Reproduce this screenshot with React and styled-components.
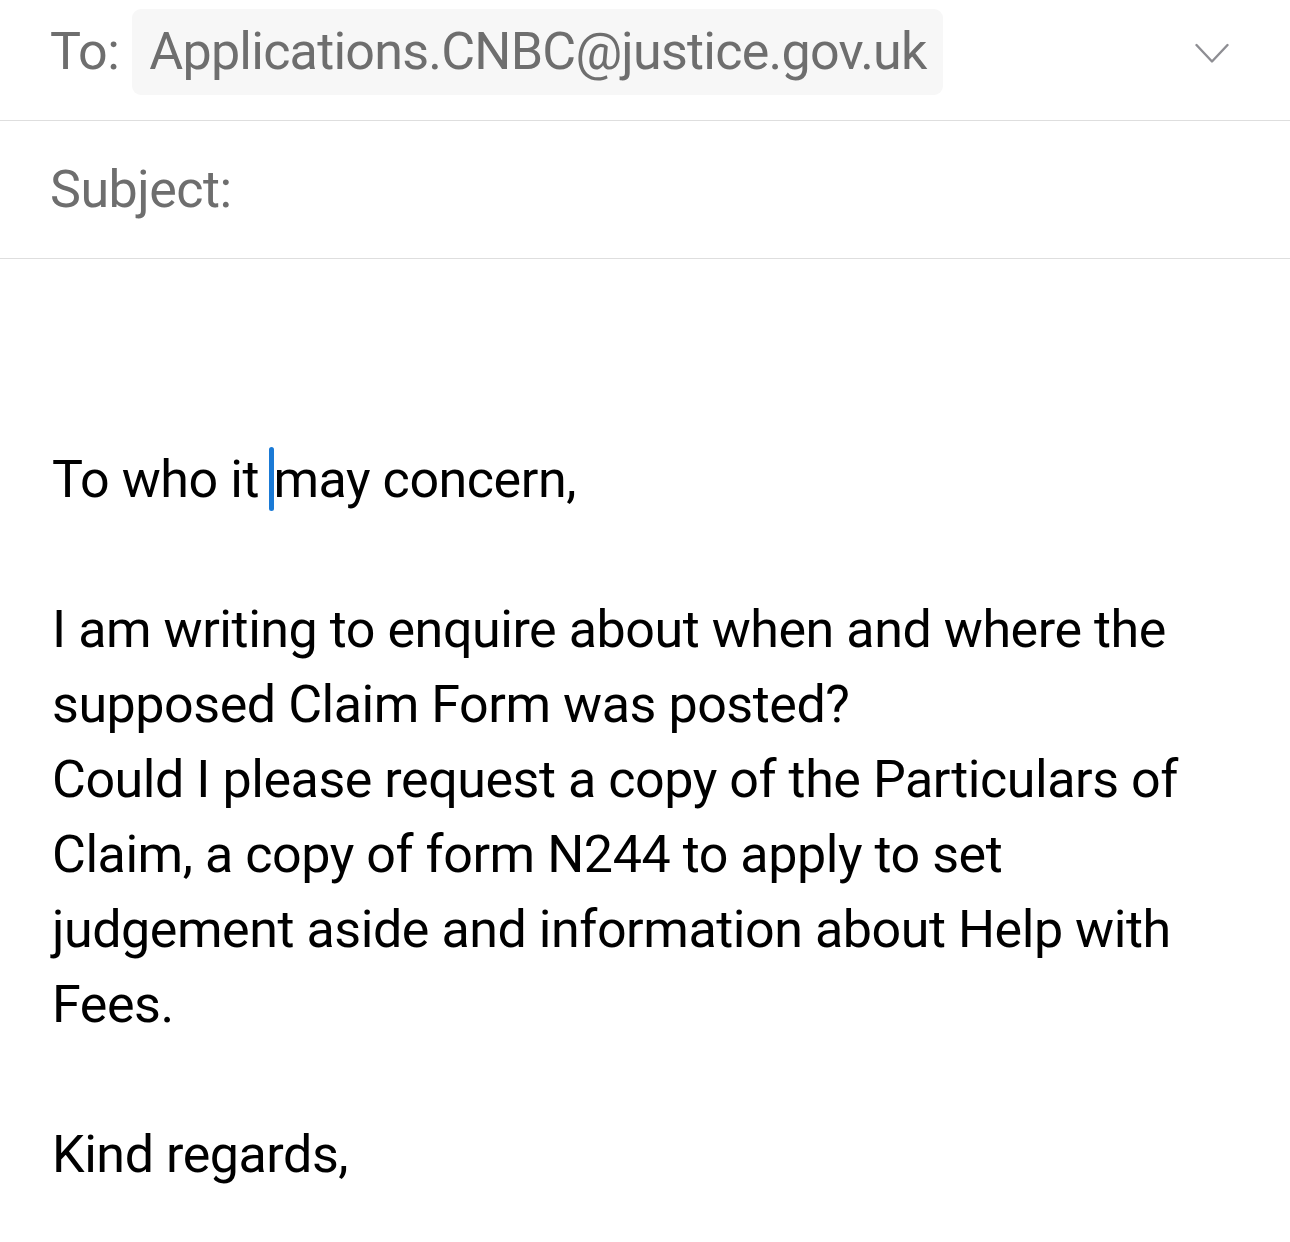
import React from "react";
import styled, { createGlobalStyle } from "styled-components";

const GlobalStyle = createGlobalStyle`
  html, body {
    margin: 0;
    padding: 0;
    background: #ffffff;
  }
  body {
    font-family: Roboto, "Liberation Sans", Arial, sans-serif;
    -webkit-font-smoothing: antialiased;
  }
`;

const bodyLines = [
  { text: "To who it ", caret: true, rest: "may concern," },
  { text: "" },
  { text: "I am writing to enquire about when and where the" },
  { text: "supposed Claim Form was posted?" },
  { text: "Could I please request a copy of the Particulars of" },
  { text: "Claim, a copy of form N244 to apply to set" },
  { text: "judgement aside and information about Help with" },
  { text: "Fees." },
  { text: "" },
  { text: "Kind regards," },
];

export default function App() {
  return (
    <>
      <GlobalStyle />
      <Compose>
        <ToRow>
          <Label>To:</Label>
          <Recipient>Applications.CNBC@justice.gov.uk</Recipient>
          <Chevron>
            <svg width="34" height="22" viewBox="0 0 34 22" fill="none">
              <path
                d="M1.5 2 L17 18.5 L32.5 2"
                stroke="#8e8e93"
                strokeWidth="2.4"
                strokeLinecap="round"
                strokeLinejoin="round"
              />
            </svg>
          </Chevron>
        </ToRow>
        <SubjectRow>
          <Label>Subject:</Label>
        </SubjectRow>
        <Body>
          {bodyLines.map((line, i) => (
            <Line key={i}>
              {line.text || "\u00a0"}
              {line.caret && <Caret />}
              {line.rest}
            </Line>
          ))}
        </Body>
      </Compose>
    </>
  );
}

const Compose = styled.div`
  width: 1290px;
  min-height: 1242px;
  background: #ffffff;
`;

const ToRow = styled.div`
  display: flex;
  align-items: flex-start;
  height: 111px;
  padding: 9px 0 0 50px;
  border-bottom: 1px solid #dedede;
`;

const Label = styled.span`
  font-size: 52px;
  line-height: 86px;
  color: #6e6e6e;
  letter-spacing: -0.5px;
`;

const Recipient = styled.span`
  margin-left: 13px;
  height: 86px;
  padding: 0 16px 0 17px;
  border-radius: 9px;
  background: #f7f7f7;
  font-size: 52px;
  line-height: 86px;
  color: #6e6e6e;
  letter-spacing: -0.75px;
  white-space: nowrap;
`;

const Chevron = styled.div`
  margin-left: auto;
  margin-right: 61px;
  margin-top: 34px;
  display: flex;
`;

const SubjectRow = styled.div`
  height: 137px;
  padding-left: 50px;
  display: flex;
  align-items: center;
  border-bottom: 1px solid #dedede;
`;

const Body = styled.div`
  padding: 183px 40px 40px 52px;
`;

const Line = styled.div`
  font-size: 52px;
  line-height: 75px;
  color: #000000;
  letter-spacing: -0.45px;
  white-space: nowrap;
`;

const Caret = styled.span`
  display: inline-block;
  width: 5px;
  height: 64px;
  margin: 0 -1px 0 -2px;
  border-radius: 3px;
  background: #1a7ad6;
  vertical-align: -14px;
`;
